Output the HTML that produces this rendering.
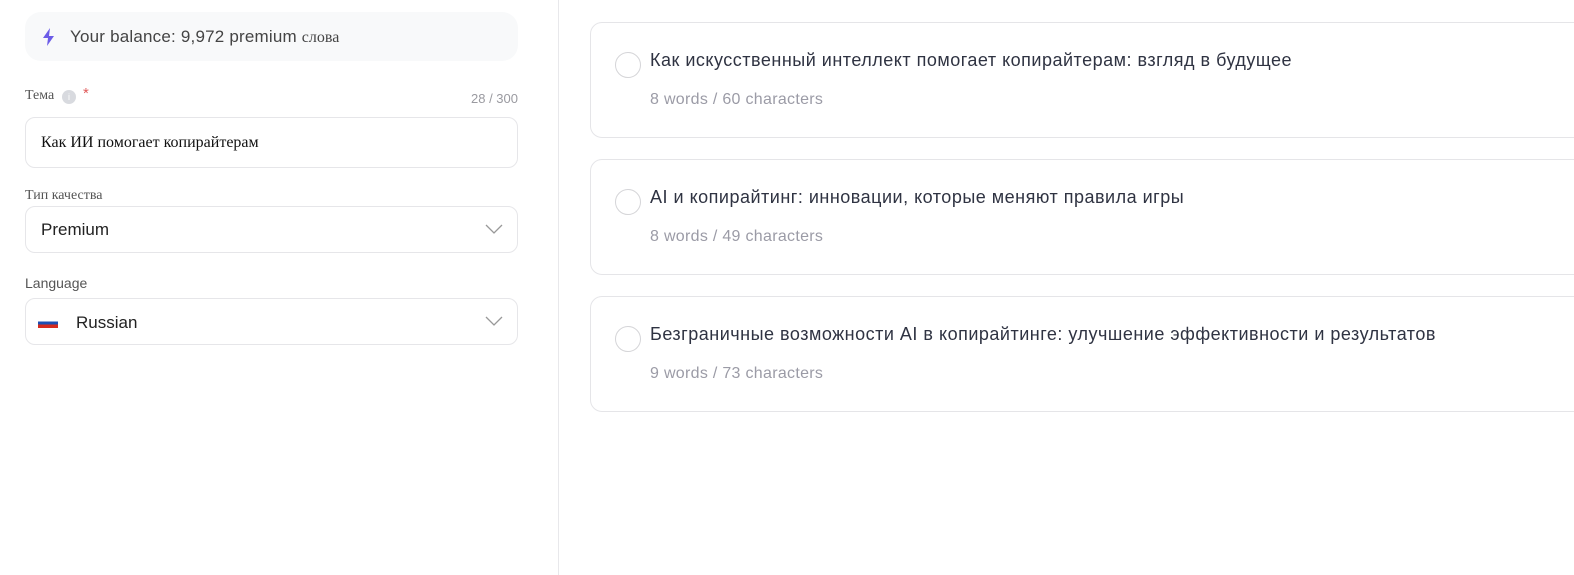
<!DOCTYPE html>
<html><head><meta charset="utf-8"><style>
*{box-sizing:border-box;margin:0;padding:0}
body{width:1574px;height:575px;background:#fff;position:relative;overflow:hidden;font-family:"Liberation Sans",sans-serif;color:#333}
.abs{position:absolute}
.bal{left:25px;top:12px;width:493px;height:49px;background:#f8f9fa;border-radius:16px}
.box{left:25px;width:493px;border:1px solid #e6e6e9;border-radius:10px;background:#fff}
.serif{font-family:"Liberation Serif",serif}
.card{left:590px;width:1000px;height:116px;border:1px solid #e5e5e8;border-radius:12px}
.circ{left:24px;top:29px;width:26px;height:26px;border:1px solid #d5d5d8;border-radius:50%}
.t{left:59px;top:27px;font-size:18px;color:#2f3342;letter-spacing:0.5px}
.m{left:59px;top:68px;font-size:16px;color:#9b9ba6;letter-spacing:0.3px}
.chev{right:14px}
</style></head><body>
<div class="abs bal">
<svg class="abs" style="left:17px;top:16px" width="14" height="18" viewBox="0 0 14 18"><path d="M8 0L1 10h5l-1 8 7-10H7z" fill="#6c5ce7"/></svg>
<div class="abs" style="left:45px;top:15px;font-size:17px;color:#444;letter-spacing:0.2px">Your balance: 9,972 premium <span class="serif" style="font-size:16px;letter-spacing:0">слова</span></div>
</div>
<div class="abs serif" style="left:25px;top:88px;font-size:14px;color:#555">Тема</div>
<div class="abs" style="left:62px;top:90px;width:14px;height:14px;border-radius:50%;background:#d8dadf;color:#fff;font-size:9px;text-align:center;line-height:14px">i</div>
<div class="abs" style="left:83px;top:85px;color:#e05a5a;font-size:15px">*</div>
<div class="abs" style="right:1056px;top:91px;font-size:13px;color:#9a9aa0">28 / 300</div>
<div class="abs box" style="top:117px;height:51px"><div class="abs serif" style="left:15px;top:16px;font-size:16px;color:#111">Как ИИ помогает копирайтерам</div></div>
<div class="abs serif" style="left:25px;top:188px;font-size:14px;color:#555">Тип качества</div>
<div class="abs box" style="top:206px;height:47px"><div class="abs" style="left:15px;top:13px;font-size:17px;color:#222">Premium</div>
<svg class="abs chev" style="top:17px" width="18" height="10" viewBox="0 0 18 10"><path d="M1 1l8 8 8-8" fill="none" stroke="#999" stroke-width="1.3"/></svg></div>
<div class="abs" style="left:25px;top:275px;font-size:14px;color:#555">Language</div>
<div class="abs box" style="top:298px;height:47px">
<div class="abs" style="left:12px;top:19px;width:20px;height:10px;background:linear-gradient(#fff 0 33%,#1d4fb3 33% 66%,#d52b1e 66%)"></div>
<div class="abs" style="left:50px;top:14px;font-size:17px;color:#222">Russian</div>
<svg class="abs chev" style="top:17px" width="18" height="10" viewBox="0 0 18 10"><path d="M1 1l8 8 8-8" fill="none" stroke="#999" stroke-width="1.3"/></svg></div>
<div class="abs" style="left:558px;top:0;width:1px;height:575px;background:#e8e8eb"></div>
<div class="abs card" style="top:22px"><div class="abs circ"></div><div class="abs t">Как искусственный интеллект помогает копирайтерам: взгляд в будущее</div><div class="abs m">8 words / 60 characters</div></div>
<div class="abs card" style="top:159px"><div class="abs circ"></div><div class="abs t">AI и копирайтинг: инновации, которые меняют правила игры</div><div class="abs m">8 words / 49 characters</div></div>
<div class="abs card" style="top:296px"><div class="abs circ"></div><div class="abs t">Безграничные возможности AI в копирайтинге: улучшение эффективности и результатов</div><div class="abs m">9 words / 73 characters</div></div>
</body></html>
